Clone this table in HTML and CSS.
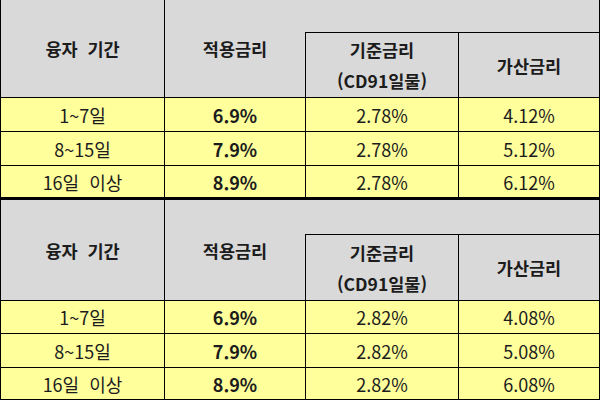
FILE: index.html
```html
<!DOCTYPE html>
<html lang="ko">
<head>
<meta charset="utf-8">
<link rel="stylesheet" href="styles.css">
</head>
<body>
<div class="sheet">
  <div class="tbl tbl-first">
    <div class="cell head span2">융자&nbsp;&nbsp;기간</div>
    <div class="cell head span2">적용금리</div>
    <div class="cell head top"></div>
    <div class="cell head two">기준금리<br>(CD91일물)</div>
    <div class="cell head">가산금리</div>
    <div class="cell data">1~7일</div>
    <div class="cell data bold">6.9%</div>
    <div class="cell data">2.78%</div>
    <div class="cell data">4.12%</div>
    <div class="cell data">8~15일</div>
    <div class="cell data bold">7.9%</div>
    <div class="cell data">2.78%</div>
    <div class="cell data">5.12%</div>
    <div class="cell data">16일&nbsp;&nbsp;이상</div>
    <div class="cell data bold">8.9%</div>
    <div class="cell data">2.78%</div>
    <div class="cell data">6.12%</div>
  </div>
  <div class="tbl tbl-second">
    <div class="cell head span2">융자&nbsp;&nbsp;기간</div>
    <div class="cell head span2">적용금리</div>
    <div class="cell head top"></div>
    <div class="cell head two">기준금리<br>(CD91일물)</div>
    <div class="cell head">가산금리</div>
    <div class="cell data">1~7일</div>
    <div class="cell data bold">6.9%</div>
    <div class="cell data">2.82%</div>
    <div class="cell data">4.08%</div>
    <div class="cell data">8~15일</div>
    <div class="cell data bold">7.9%</div>
    <div class="cell data">2.82%</div>
    <div class="cell data">5.08%</div>
    <div class="cell data">16일&nbsp;&nbsp;이상</div>
    <div class="cell data bold">8.9%</div>
    <div class="cell data">2.82%</div>
    <div class="cell data">6.08%</div>
  </div>
</div>
</body>
</html>
```

FILE: styles.css
```css
html, body {
  margin: 0;
  padding: 0;
  background: #ffffff;
}

.sheet {
  width: 600px;
  display: flex;
  flex-direction: column;
  font-family: "Noto Sans CJK KR", "Noto Sans", sans-serif;
  color: #1c1c1c;
}

.tbl {
  display: grid;
  grid-template-columns: 163px 140px 152px 140px;
  column-gap: 1px;
  row-gap: 1px;
  background: #000000;
}

.tbl-first {
  padding: 0 1px 2px 1px;
  grid-template-rows: 32px 64px 33px 33px 31px;
}

.tbl-second {
  padding: 1px 1px 1px 1px;
  grid-template-rows: 34px 65px 32px 33px 31px;
}

.cell {
  display: flex;
  align-items: center;
  justify-content: center;
  text-align: center;
  font-size: 18px;
}

.head {
  background: #d9d9d9;
  font-weight: 700;
  font-size: 17.5px;
}

.span2 {
  grid-row: span 2;
}

.top {
  grid-column: span 2;
  margin-left: -1px;
}

.two {
  line-height: 31px;
}

.data {
  background: #ffff9c;
  font-weight: 400;
}

.bold {
  font-weight: 700;
}
```
